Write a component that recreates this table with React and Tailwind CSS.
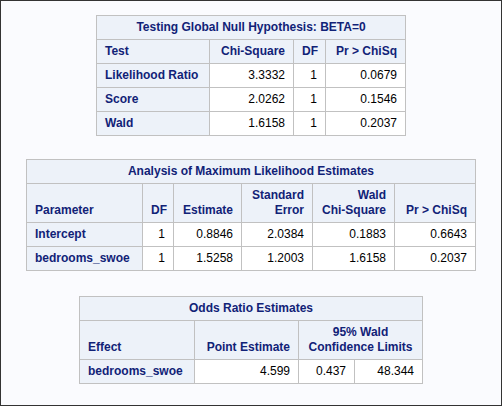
import React from "react";

const hdr = "bg-[#edf2f9] text-[#112277] font-bold border-r border-b border-[#c1c1c1] px-[8px] py-[4px]";
const dat = "bg-white text-black font-normal border-r border-b border-[#c1c1c1] px-[8px] py-[4px] text-right";

function Table({ widths, title, head, rows, className }) {
  const total = widths.reduce((a, b) => a + b, 0) + 1;
  return (
    <table
      className={"table-fixed border-separate border-spacing-0 border-l border-t border-[#c1c1c1] mx-auto " + (className || "")}
      style={{ width: total }}
    >
      <colgroup>
        {widths.map((w, i) => (
          <col key={i} style={{ width: w }} />
        ))}
      </colgroup>
      <thead>
        <tr>
          <th colSpan={widths.length} className={hdr + " text-center"}>
            {title}
          </th>
        </tr>
        {head}
      </thead>
      <tbody>{rows}</tbody>
    </table>
  );
}

export default function App() {
  return (
    <div
      className="w-[502px] h-[406px] border border-[#333333] bg-[#fafbfe] pt-[14px] text-[12px] leading-[15px]"
      style={{ fontFamily: '"Liberation Sans", Arial, sans-serif' }}
    >
      <Table
        widths={[113, 84, 32, 80]}
        title="Testing Global Null Hypothesis: BETA=0"
        head={
          <tr>
            <th className={hdr + " text-left"}>Test</th>
            <th className={hdr + " text-right"}>Chi-Square</th>
            <th className={hdr + " text-right"}>DF</th>
            <th className={hdr + " text-right"}>Pr &gt; ChiSq</th>
          </tr>
        }
        rows={[
          ["Likelihood Ratio", "3.3332", "1", "0.0679"],
          ["Score", "2.0262", "1", "0.1546"],
          ["Wald", "1.6158", "1", "0.2037"],
        ].map((r) => (
          <tr key={r[0]}>
            <th className={hdr + " text-left"}>{r[0]}</th>
            <td className={dat}>{r[1]}</td>
            <td className={dat}>{r[2]}</td>
            <td className={dat}>{r[3]}</td>
          </tr>
        ))}
      />

      <Table
        className="mt-[23px]"
        widths={[116, 31, 68, 71, 82, 81]}
        title="Analysis of Maximum Likelihood Estimates"
        head={
          <tr>
            <th className={hdr + " text-left align-bottom"}>Parameter</th>
            <th className={hdr + " text-right align-bottom"}>DF</th>
            <th className={hdr + " text-right align-bottom"}>Estimate</th>
            <th className={hdr + " text-right align-bottom"}>
              Standard
              <br />
              Error
            </th>
            <th className={hdr + " text-right align-bottom"}>
              Wald
              <br />
              Chi-Square
            </th>
            <th className={hdr + " text-right align-bottom"}>Pr &gt; ChiSq</th>
          </tr>
        }
        rows={[
          ["Intercept", "1", "0.8846", "2.0384", "0.1883", "0.6643"],
          ["bedrooms_swoe", "1", "1.5258", "1.2003", "1.6158", "0.2037"],
        ].map((r) => (
          <tr key={r[0]}>
            <th className={hdr + " text-left"}>{r[0]}</th>
            {r.slice(1).map((c, i) => (
              <td key={i} className={dat}>
                {c}
              </td>
            ))}
          </tr>
        ))}
      />

      <Table
        className="mt-[25px]"
        widths={[115, 104, 56, 68]}
        title="Odds Ratio Estimates"
        head={
          <tr>
            <th className={hdr + " text-left align-bottom"}>Effect</th>
            <th className={hdr + " text-right align-bottom"}>Point Estimate</th>
            <th colSpan={2} className={hdr + " text-center align-bottom"}>
              95% Wald
              <br />
              Confidence Limits
            </th>
          </tr>
        }
        rows={[
          <tr key="b">
            <th className={hdr + " text-left"}>bedrooms_swoe</th>
            <td className={dat}>4.599</td>
            <td className={dat}>0.437</td>
            <td className={dat}>48.344</td>
          </tr>,
        ]}
      />
    </div>
  );
}
